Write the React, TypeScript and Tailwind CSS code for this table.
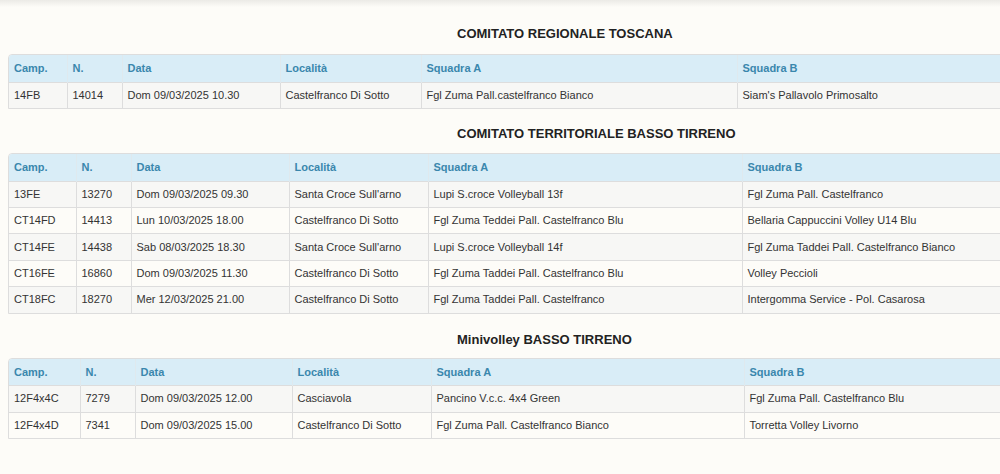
import React from "react";

type Section = {
  title: string;
  widths: number[];
  rows: string[][];
  head: string;
};

const sections: Section[] = [
  {
    title: "COMITATO REGIONALE TOSCANA",
    head: "mt-[18px] mb-[10px]",
    widths: [58, 55, 158, 141, 316, 384],
    rows: [
      ["14FB", "14014", "Dom 09/03/2025 10.30", "Castelfranco Di Sotto", "Fgl Zuma Pall.castelfranco Bianco", "Siam's Pallavolo Primosalto"],
    ],
  },
  {
    title: "COMITATO TERRITORIALE BASSO TIRRENO",
    head: "mt-[14.5px] mb-[9.5px]",
    widths: [67, 55, 158, 139, 314, 379],
    rows: [
      ["13FE", "13270", "Dom 09/03/2025 09.30", "Santa Croce Sull'arno", "Lupi S.croce Volleyball 13f", "Fgl Zuma Pall. Castelfranco"],
      ["CT14FD", "14413", "Lun 10/03/2025 18.00", "Castelfranco Di Sotto", "Fgl Zuma Teddei Pall. Castelfranco Blu", "Bellaria Cappuccini Volley U14 Blu"],
      ["CT14FE", "14438", "Sab 08/03/2025 18.30", "Santa Croce Sull'arno", "Lupi S.croce Volleyball 14f", "Fgl Zuma Taddei Pall. Castelfranco Bianco"],
      ["CT16FE", "16860", "Dom 09/03/2025 11.30", "Castelfranco Di Sotto", "Fgl Zuma Taddei Pall. Castelfranco Blu", "Volley Peccioli"],
      ["CT18FC", "18270", "Mer 12/03/2025 21.00", "Castelfranco Di Sotto", "Fgl Zuma Taddei Pall. Castelfranco", "Intergomma Service - Pol. Casarosa"],
    ],
  },
  {
    title: "Minivolley BASSO TIRRENO",
    head: "mt-[16.5px] mb-[7.5px]",
    widths: [71, 55, 157, 139, 313, 377],
    rows: [
      ["12F4x4C", "7279", "Dom 09/03/2025 12.00", "Casciavola", "Pancino V.c.c. 4x4 Green", "Fgl Zuma Pall. Castelfranco Blu"],
      ["12F4x4D", "7341", "Dom 09/03/2025 15.00", "Castelfranco Di Sotto", "Fgl Zuma Pall. Castelfranco Bianco", "Torretta Volley Livorno"],
    ],
  },
];

const headers = ["Camp.", "N.", "Data", "Località", "Squadra A", "Squadra B"];

function Table({ s }: { s: Section }) {
  return (
    <div className="ml-[8px] w-[1112px] overflow-hidden rounded-tl-[4px] border border-[#dddddd]">
      <table className="w-full table-fixed border-collapse">
        <colgroup>
          {s.widths.map((w, i) => (
            <col key={i} style={{ width: w }} />
          ))}
        </colgroup>
        <thead>
          <tr className="bg-[#d9edf7]">
            {headers.map((h, i) => (
              <th
                key={h}
                className={`h-[27px] px-[5px] text-left align-middle text-[11px] font-bold leading-[15px] text-[#3a87ad] ${i > 0 ? "border-l border-[#dfe9ee]" : ""}`}
              >
                {h}
              </th>
            ))}
          </tr>
        </thead>
        <tbody>
          {s.rows.map((r, ri) => (
            <tr key={ri} className={ri % 2 === 0 ? "bg-[#f7f7f5]" : "bg-[#fdfcf8]"}>
              {r.map((c, ci) => (
                <td
                  key={ci}
                  className={`h-[26.3px] border-t border-[#dddddd] px-[5px] align-middle text-[11px] leading-[15px] text-[#333333] whitespace-nowrap ${ci > 0 ? "border-l" : ""}`}
                >
                  {c}
                </td>
              ))}
            </tr>
          ))}
        </tbody>
      </table>
    </div>
  );
}

export default function App() {
  return (
    <div
      className="relative h-[474px] w-[1000px] overflow-hidden bg-[#fdfcf8]"
      style={{ fontFamily: '"Liberation Sans", Arial, sans-serif' }}
    >
      <div className="absolute left-0 right-0 top-0 h-[7px] bg-gradient-to-b from-[#ebeae6] to-[#fdfcf8]" />
      <div className="pt-[6px]">
        {sections.map((s) => (
          <div key={s.title}>
            <h4 className={`${s.head} pl-[457px] text-[13px] font-bold leading-[20px] text-[#222222]`}>
              {s.title}
            </h4>
            <Table s={s} />
          </div>
        ))}
      </div>
    </div>
  );
}
